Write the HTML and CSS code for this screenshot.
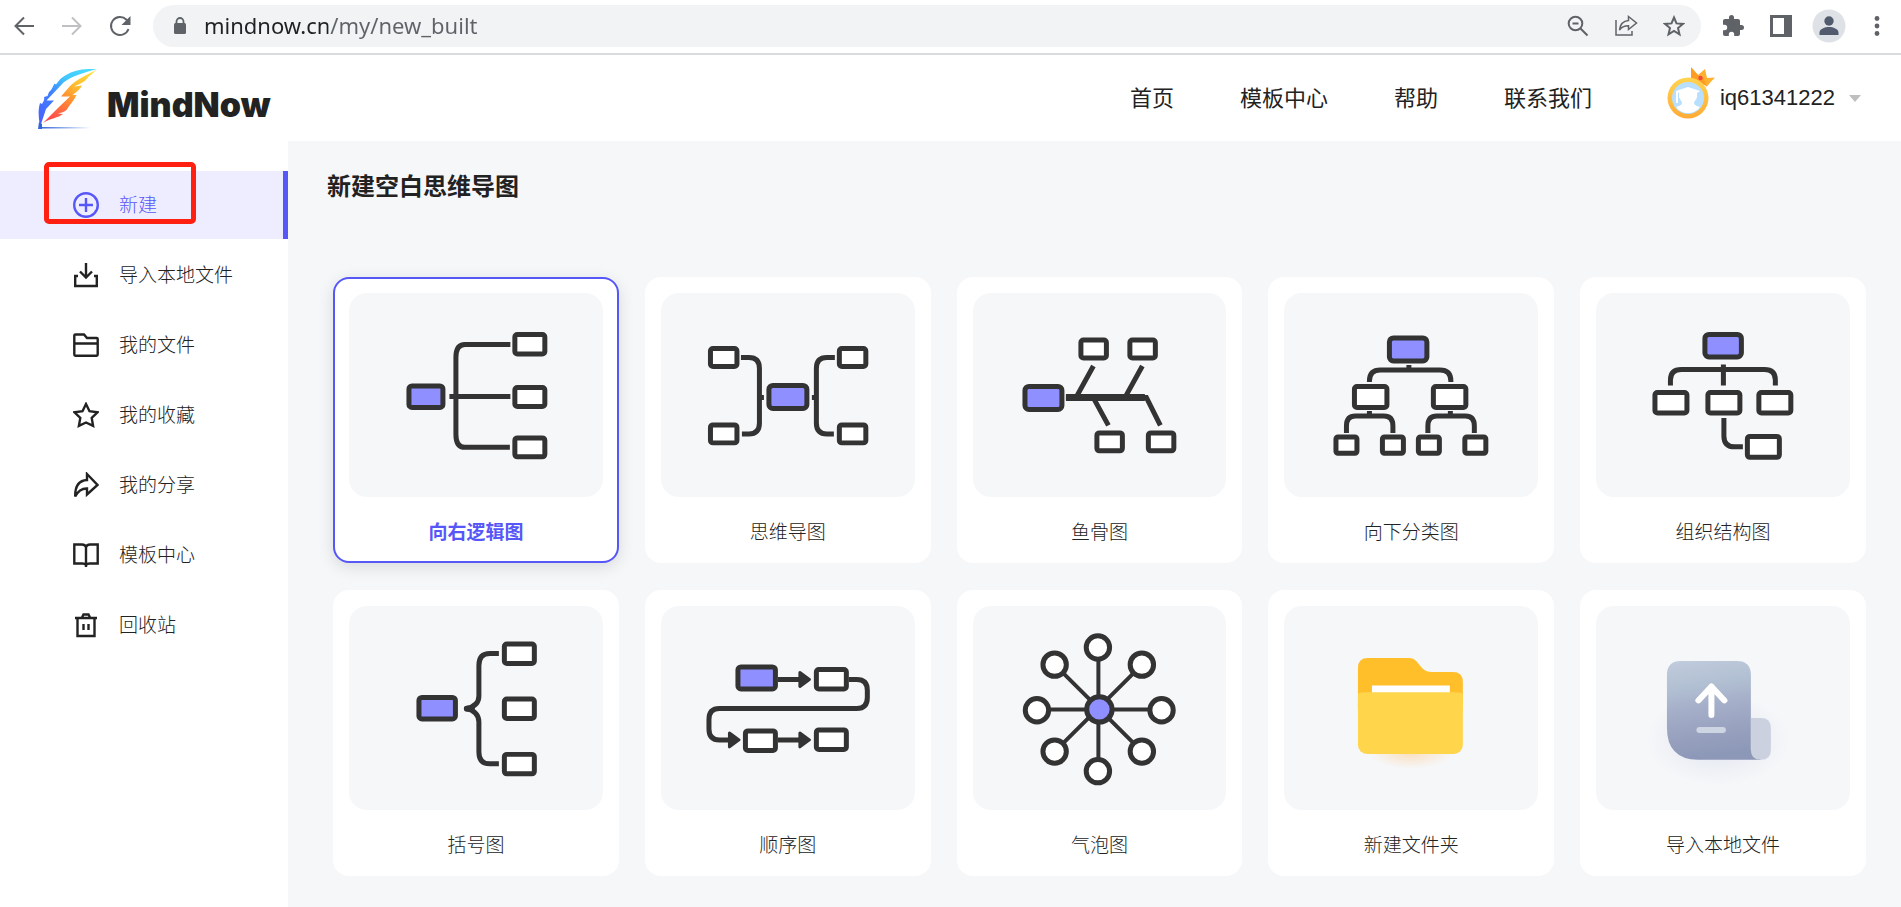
FILE: index.html
```
<!DOCTYPE html>
<html lang="zh-CN">
<head>
    <meta charset="UTF-8">
    <meta name="viewport" content="width=device-width, initial-scale=1.0">
    <title>MindNow</title>
    <link rel="stylesheet" href="styles.css">
</head>
<body>
    <!-- Browser toolbar -->
    <div class="browser-bar">
        <button class="tool" aria-label="后退"><svg width="22" height="22" viewBox="0 0 22 22" class="line"><path d="M21 11H3M11 2.500l-8.500 8.500 8.500 8.500"/></svg></button>
        <button class="tool disabled" aria-label="前进"><svg width="22" height="22" viewBox="0 0 22 22" class="line"><path d="M1 11h18M11 2.500l8.500 8.500-8.500 8.500"/></svg></button>
        <button class="tool" aria-label="刷新"><svg width="22" height="22" viewBox="0 0 22 22" class="line"><path d="M19.500 14A9 9 0 1 1 17.500 4.700L20 7.500"/><path d="M21.500 1v9h-9z" fill="#5f6368" stroke="none"/></svg></button>
        <div class="address">
            <svg class="lock" width="14" height="18" viewBox="0 0 14 18"><rect x="1" y="6" width="12" height="11" rx="1.500" fill="#5f6368"/><path d="M3.500 7V4.500a3.500 3.500 0 0 1 7 0V7" fill="none" stroke="#5f6368" stroke-width="1.800"/></svg>
            <input class="url" type="text" value="mindnow.cn/my/new_built" aria-label="地址">
            <button class="tool" aria-label="缩放"><svg width="22" height="22" viewBox="0 0 22 22" class="line"><circle cx="8.500" cy="8.500" r="6.800"/><path d="M13.500 13.500l7 7M5.500 8.500h6"/></svg></button>
            <button class="tool" aria-label="分享"><svg width="24" height="22" viewBox="0 0 24 22" class="line thin"><path d="M2 5v15h16v-4"/><path d="M14.500 1.500l8 6.500-8 6.500v-3.700c-4 0-7 1-9 4.200.6-5 3.500-9 9-9.500z"/></svg></button>
            <button class="tool" aria-label="收藏"><svg width="22" height="22" viewBox="0 0 22 22" class="line"><path d="M11 2.500l2.500 5.900 6.400.5-4.900 4.200 1.500 6.200-5.500-3.300-5.500 3.300L7 13.100 2.100 8.900l6.400-.5z"/></svg></button>
        </div>
        <button class="tool" aria-label="扩展程序"><svg width="24" height="24" viewBox="0 0 24 24"><path fill="#5f6368" d="M20.500 11H19V7c0-1.100-.9-2-2-2h-4V3.500a2.500 2.500 0 0 0-5 0V5H4c-1.100 0-2 .9-2 2v3.800h1.500a2.700 2.700 0 0 1 0 5.400H2V20c0 1.100.9 2 2 2h3.800v-1.500a2.700 2.700 0 0 1 5.400 0V22H17c1.100 0 2-.9 2-2v-4h1.500a2.500 2.500 0 0 0 0-5z"/></svg></button>
        <button class="tool" aria-label="侧边栏"><svg width="22" height="22" viewBox="0 0 22 22"><path fill="#5f6368" fill-rule="evenodd" d="M0 0h22v22H0zM3 3v16h11V3z"/><path fill="#fff" d="M3 3h11v16H3z"/></svg></button>
        <button class="tool" aria-label="用户"><svg width="34" height="34" viewBox="0 0 34 34"><circle cx="17" cy="17" r="16.500" fill="#dee1e6"/><circle cx="17" cy="12" r="4.700" fill="#525b6d"/><path d="M7.500 26v-2.500c0-3.600 5.500-5.500 9.500-5.500s9.500 1.900 9.500 5.500V26z" fill="#525b6d"/></svg></button>
        <button class="tool" aria-label="菜单"><svg width="6" height="22" viewBox="0 0 6 22" fill="#5f6368"><circle cx="3" cy="3.500" r="2.400"/><circle cx="3" cy="11" r="2.400"/><circle cx="3" cy="18.500" r="2.400"/></svg></button>
    </div>

    <!-- Site header -->
    <header class="header">
        <a class="logo" href="#">
            <svg width="60" height="60" viewBox="0 0 60 60">
                <defs>
                    <linearGradient id="featherBlue" x1="1" y1="0" x2="0" y2="1"><stop offset="0" stop-color="#4be0ff"/><stop offset=".35" stop-color="#42c8ff"/><stop offset=".6" stop-color="#3f82ff"/><stop offset="1" stop-color="#4a5cff"/></linearGradient>
                    <linearGradient id="featherWarm" x1=".9" y1="0" x2=".1" y2="1"><stop offset="0" stop-color="#ffe13c"/><stop offset=".35" stop-color="#ffb82e"/><stop offset=".65" stop-color="#ff7a38"/><stop offset="1" stop-color="#ff3f55"/></linearGradient>
                    <linearGradient id="inkLine" x1="0" x2="1"><stop offset="0" stop-color="#3566d8"/><stop offset="1" stop-color="#3566d8" stop-opacity="0"/></linearGradient>
                </defs>
                <path fill="url(#featherBlue)" d="M59 0C46-.5 36 1 28 6c-4 2-7 5-10 9.500l-1.500-1C14.500 18 14 21 11 23l-1.500 4-3.500 1c1 3-1 5-2 7l-2-1c-2 7-1.500 13-.5 20l1.500 1 5-15 8-8.500H8.500l17-18C34 7 44 4.500 59 0z"/>
                <path fill="url(#featherWarm)" d="M58.500.5C52 5 40 9 32 17l-9 10.500h9L21 38 5 54c8-5 15-5 20-9l-5-.5c4-1 6-1.500 8.500-3.500 3-5 8-10 10-15h-4c4-3 8-6 9.500-9.500L36 17.500c8-3.500 11-5 13-8 2-3 6-5 9.500-9z"/>
                <path fill="#3566d8" d="M1 53l3 2v5H0z"/>
                <path fill="url(#inkLine)" d="M3 58h50v1.500H3z"/>
            </svg>
            <span class="logo-text">MindNow</span>
        </a>
        <nav class="top-nav">
            <a href="#">首页</a>
            <a href="#">模板中心</a>
            <a href="#">帮助</a>
            <a href="#">联系我们</a>
        </nav>
        <button class="user">
            <svg width="48" height="54" viewBox="0 0 48 54">
                <defs>
                    <linearGradient id="ring" x1="0" y1="0" x2="0" y2="1"><stop offset="0" stop-color="#ffd451"/><stop offset="1" stop-color="#ffab36"/></linearGradient>
                </defs>
                <path fill="#ffb02e" d="M24 0l7 8 7-6 2 9 8-.5c-4 4-6 6-8 9z"/>
                <path fill="#ff9c24" d="M24 0v11l16 8.500-4-9-5-2.500z"/>
                <circle cx="33.500" cy="11" r="2.200" fill="#f0483e"/>
                <circle cx="21" cy="31" r="20.500" fill="url(#ring)"/>
                <circle cx="21" cy="31" r="16" fill="#b9dfff"/>
                <path fill="#fff" d="M21 20l12 4-3 2v4c-1 3-2 4-3 5 0 3 2 4 6 5-3 4-7 6-12 6s-9-2-12-6c4-1 6-2 6-5-1-1-2-3-3-5v-4l-1-.5V36H9V24z"/>
            </svg>
            <span>iq61341222</span>
            <svg class="caret" width="12" height="7" viewBox="0 0 12 7"><path d="M0 0h12L6 7z" fill="#bfbfbf"/></svg>
        </button>
    </header>

    <div class="page">
        <nav class="sidebar">
            <a class="side-item active" href="#">
                <svg width="26" height="26" viewBox="0 0 26 26"><circle cx="13" cy="13" r="11.800"/><path d="M13 6v14M6 13h14"/></svg>
                <span>新建</span>
                <i class="marker"></i>
            </a>
            <a class="side-item" href="#">
                <svg width="26" height="26" viewBox="0 0 26 26"><path d="M5 14H2.200v10h21.600V14H21M13 1v14M7 9.500l6 6 6-6"/></svg>
                <span>导入本地文件</span>
            </a>
            <a class="side-item" href="#">
                <svg width="26" height="26" viewBox="0 0 26 26"><path d="M2.500 2.500h8.500l3 3.500h9.700q1 0 1 1v15.500q0 1.200-1 1.200H2.300q-1 0-1-1.200V3.500q0-1 1.200-1zM1 11.500h24"/></svg>
                <span>我的文件</span>
            </a>
            <a class="side-item" href="#">
                <svg width="26" height="26" viewBox="0 0 26 26"><path d="M13 2l3.500 7.200 8 1.100-5.800 5.600 1.400 8L13 20.500l-7.100 3.400 1.400-8-5.800-5.600 8-1.100z"/></svg>
                <span>我的收藏</span>
            </a>
            <a class="side-item" href="#">
                <svg width="26" height="26" viewBox="0 0 26 26"><path d="M14 2l10.500 11L14 22.500V16.500C8 16.300 5 19 2.200 24.500 2 15 5 8.500 14 8z"/></svg>
                <span>我的分享</span>
            </a>
            <a class="side-item" href="#">
                <svg width="26" height="26" viewBox="0 0 26 26"><path d="M13 25V5q-1-2.500-4-2.500H1.300v19H9.500q2.500 0 3.500 1.500 1-1.500 3.500-1.500h8.200v-19H17q-3 0-4 2.500"/></svg>
                <span>模板中心</span>
            </a>
            <a class="side-item" href="#">
                <svg width="26" height="26" viewBox="0 0 26 26"><path d="M2 6h22M4.500 6v18h17V6M9 5.500l1.500-3h5l1.500 3M10.500 12v6M15.500 12v6"/></svg>
                <span>回收站</span>
            </a>
        </nav>

        <main class="content">
            <h1>新建空白思维导图</h1>
            <div class="cards">
                <button class="card selected">
                    <span class="preview"><svg class="diagram" viewBox="0 0 254 204">
                        <path d="M161.500 51.500H116q-9 0-9 13v77q0 13 9 13h45M100.500 103.500h61"/>
                        <rect class="root" x="60" y="93" width="34" height="21.500" rx="3"/>
                        <rect x="166" y="41.500" width="30" height="19.500" rx="2.500"/>
                        <rect x="166" y="94.500" width="30" height="19" rx="2.500"/>
                        <rect x="166" y="145" width="30" height="19" rx="2.500"/>
                    </svg></span>
                    <span class="label">向右逻辑图</span>
                </button>
                <button class="card">
                    <span class="preview"><svg class="diagram" viewBox="0 0 254 204">
                        <path d="M80 64.500h8q10.500 0 10.500 11V130q0 11-10.500 11h-7M98 104.500h5M174 64.500h-8q-10.500 0-10.500 11V130q0 11 10.500 11h7M151 104.500h5"/>
                        <rect class="root" x="108" y="92.500" width="38" height="23" rx="4"/>
                        <rect x="49.500" y="55.500" width="26.500" height="18" rx="2.500"/>
                        <rect x="49.500" y="132" width="26.500" height="18" rx="2.500"/>
                        <rect x="178.500" y="55.500" width="26.500" height="18" rx="2.500"/>
                        <rect x="178.500" y="132" width="26.500" height="18" rx="2.500"/>
                    </svg></span>
                    <span class="label">思维导图</span>
                </button>
                <button class="card">
                    <span class="preview"><svg class="diagram" viewBox="0 0 254 204">
                        <path d="M93 104.500h80.500l14 28M120.500 73L104 103M169.500 73L153 103M120.500 105l15 27.500"/>
                        <path d="M93 104.500h79" stroke-width="7"/>
                        <rect class="root" x="52" y="93.500" width="37" height="23" rx="4"/>
                        <rect x="108" y="47" width="25.500" height="18" rx="2.500"/>
                        <rect x="157" y="47" width="25.500" height="18" rx="2.500"/>
                        <rect x="124" y="140" width="25.500" height="18" rx="2.500"/>
                        <rect x="175.500" y="140" width="25.500" height="18" rx="2.500"/>
                    </svg></span>
                    <span class="label">鱼骨图</span>
                </button>
                <button class="card">
                    <span class="preview"><svg class="diagram" viewBox="0 0 254 204">
                        <path d="M85.500 89v-1q0-11 11-11h59.500q11 0 11 11v1M125 72v5M62.500 140v-7q0-10 9-10h28.500q9 0 9 10v7M85.500 118v5M144 140v-7q0-10 9-10h28.500q9 0 9 10v7M166.500 118v5"/>
                        <rect class="root" x="105.500" y="45" width="37.500" height="23" rx="4"/>
                        <rect x="70.500" y="93.500" width="32.500" height="21" rx="2.500"/>
                        <rect x="149.500" y="93.500" width="32.500" height="21" rx="2.500"/>
                        <rect x="52" y="144" width="21" height="16.500" rx="2"/>
                        <rect x="98.500" y="144" width="21" height="16.500" rx="2"/>
                        <rect x="134.500" y="144" width="21" height="16.500" rx="2"/>
                        <rect x="181" y="144" width="21" height="16.500" rx="2"/>
                    </svg></span>
                    <span class="label">向下分类图</span>
                </button>
                <button class="card">
                    <span class="preview"><svg class="diagram" viewBox="0 0 254 204">
                        <path d="M74.500 92.500V87q0-10.500 11-10.500h83q11 0 11 10.500v5.500M127.500 71.500v21M128 125v18q0 11 11 11h8"/>
                        <rect class="root" x="109" y="41.500" width="36.500" height="22.500" rx="4"/>
                        <rect x="59" y="99.500" width="32" height="20.500" rx="2.500"/>
                        <rect x="112" y="99.500" width="32" height="20.500" rx="2.500"/>
                        <rect x="163" y="99.500" width="32" height="20.500" rx="2.500"/>
                        <rect x="151.500" y="143.500" width="32" height="21" rx="2.500"/>
                    </svg></span>
                    <span class="label">组织结构图</span>
                </button>
                <button class="card">
                    <span class="preview"><svg class="diagram" viewBox="0 0 254 204">
                        <path d="M150 47.500h-9q-11 0-11 12V90q0 10-12.500 12.500Q130 106 130 116v30q0 12 11 12h9" stroke-linejoin="round"/>
                        <path d="M118 102.800h5" stroke-width="6" stroke-linecap="round"/>
                        <rect class="root" x="70" y="91.500" width="36.500" height="21.500" rx="3"/>
                        <rect x="155.500" y="38" width="30" height="19.500" rx="2.500"/>
                        <rect x="155.500" y="93" width="30" height="19.500" rx="2.500"/>
                        <rect x="155.500" y="148.500" width="30" height="19.500" rx="2.500"/>
                    </svg></span>
                    <span class="label">括号图</span>
                </button>
                <button class="card">
                    <span class="preview"><svg class="diagram" viewBox="0 0 254 204">
                        <path d="M117 73.500h23M188 73.500h8q10.500 0 10.500 11v7q0 11-10.500 11H58.500q-10.500 0-10.500 11v9.500q0 11 10.500 11H69M117 134h23"/>
                        <path class="head" d="M139 66.500l9.500 7-9.500 7zM139 127l9.500 7-9.500 7zM68.500 127l9.500 7-9.500 7z"/>
                        <rect class="root" x="77" y="61" width="37.500" height="22" rx="3"/>
                        <rect x="155.500" y="63.500" width="30" height="19.500" rx="2.500"/>
                        <rect x="84.500" y="125" width="30" height="19.500" rx="2.500"/>
                        <rect x="155.500" y="124" width="30" height="19.500" rx="2.500"/>
                    </svg></span>
                    <span class="label">顺序图</span>
                </button>
                <button class="card">
                    <span class="preview"><svg class="diagram" viewBox="0 0 254 204">
                        <path stroke-width="4" d="M125.500 41v124M64 103.500h124M82 59l87 86.500M169 59l-87 86.500"/>
                        <circle class="root" cx="126.500" cy="103.500" r="12.700"/>
                        <circle cx="125" cy="41.500" r="11.700"/>
                        <circle cx="169" cy="58.700" r="11.700"/>
                        <circle cx="188.700" cy="104.300" r="11.700"/>
                        <circle cx="169" cy="145.700" r="11.700"/>
                        <circle cx="125" cy="165.300" r="11.700"/>
                        <circle cx="81.700" cy="145.700" r="11.700"/>
                        <circle cx="64" cy="104.300" r="11.700"/>
                        <circle cx="81.700" cy="58.700" r="11.700"/>
                    </svg></span>
                    <span class="label">气泡图</span>
                </button>
                <button class="card">
                    <span class="preview"><svg viewBox="0 0 254 204">
                        <defs>
                            <radialGradient id="folderGlow"><stop offset="0" stop-color="#ffc27a" stop-opacity=".45"/><stop offset="1" stop-color="#ffc27a" stop-opacity="0"/></radialGradient>
                        </defs>
                        <ellipse cx="127" cy="147" rx="42" ry="16" fill="url(#folderGlow)"/>
                        <path fill="#ffbf2a" d="M74 62q0-10 10-10h41c11 0 10 14 23 14h21q10 0 10 10v24H74z"/>
                        <path fill="#fff" d="M88 79.500h78V90H88z"/>
                        <rect x="74" y="86.500" width="105" height="61.500" fill="#ffd54c" rx="9"/>
                        <rect x="74" y="86.500" width="105" height="20" fill="#ffd54c" rx="3"/>
                    </svg></span>
                    <span class="label">新建文件夹</span>
                </button>
                <button class="card">
                    <span class="preview"><svg viewBox="0 0 254 204">
                        <defs>
                            <linearGradient id="sheet" x1="0" y1="0" x2=".15" y2="1"><stop offset="0" stop-color="#c1ccdd"/><stop offset=".3" stop-color="#b1bfd2"/><stop offset=".5" stop-color="#a5afc9"/><stop offset="1" stop-color="#8d97b7"/></linearGradient>
                            <radialGradient id="sheetGlow"><stop offset="0" stop-color="#a9b8d6" stop-opacity=".3"/><stop offset="1" stop-color="#a9b8d6" stop-opacity="0"/></radialGradient>
                        </defs>
                        <ellipse cx="122" cy="134" rx="72" ry="46" fill="url(#sheetGlow)"/>
                        <path fill="url(#sheet)" d="M71 69q0-14 14-14h56q14 0 14 14v75l10 10h-63q-31-1-31-32z"/>
                        <path fill="#ccd1e0" d="M155 112h10q10 0 10 10v22q0 10-10 10t-10-10z"/>
                        <path d="M115.500 82v27M102.500 94.500l13-14 13 14" fill="none" stroke="#fff" stroke-width="6" stroke-linecap="round" stroke-linejoin="round"/>
                        <rect x="100.500" y="121" width="29.500" height="6" rx="3" fill="#cdd4e2"/>
                    </svg></span>
                    <span class="label">导入本地文件</span>
                </button>
            </div>
        </main>
    </div>
</body>
</html>
```
FILE: styles.css
```
* {
    box-sizing: border-box;
}
body {
    display: flex;
    flex-direction: column;
    min-height: 100vh;
    margin: 0;
    font-family: "Liberation Sans", "Noto Sans CJK SC", sans-serif;
    background: #fff;
    color: #222;
}
a {
    color: inherit;
    text-decoration: none;
}
button {
    padding: 0;
    border: none;
    background: none;
    font-family: inherit;
    color: inherit;
    cursor: pointer;
}

/* browser toolbar */
.browser-bar {
    display: flex;
    align-items: center;
    padding: 5px 0 6px;
    border-bottom: 2px solid #dadbdc;
}
.tool {
    display: flex;
    flex: none;
    align-items: center;
    justify-content: center;
    width: 48px;
    height: 42px;
}
.tool.disabled {
    opacity: 0.4;
}
.line {
    fill: none;
    stroke: #5f6368;
    stroke-width: 2;
}
.line.thin {
    stroke-width: 1.5;
}
.address {
    display: flex;
    flex: 1;
    align-items: center;
    height: 42px;
    margin: 0 8px 0 9px;
    padding: 0 3px 0 20px;
    border-radius: 21px;
    background: #f1f3f4;
}
.lock {
    flex: none;
}
.url {
    flex: 1;
    height: 42px;
    margin-left: 17px;
    padding: 0 0 2px;
    border: none;
    outline: none;
    font-family: "Noto Sans", sans-serif;
    font-size: 22px;
    /* domain dark, path grey */
    background: linear-gradient(90deg, #202124 124px, #5f6368 124px);
    -webkit-background-clip: text;
    background-clip: text;
    -webkit-text-fill-color: transparent;
}

/* header */
.header {
    display: flex;
    align-items: center;
    height: 86px;
    padding: 0 40px 0 38px;
}
.logo {
    display: flex;
    align-items: center;
    gap: 9px;
    margin-right: auto;
}
.logo svg {
    margin-top: 2px;
}
.logo-text {
    padding-top: 14px;
    font-family: Inter, sans-serif;
    font-size: 34px;
    font-weight: 900;
    line-height: 40px;
}
.top-nav {
    display: flex;
    gap: 66px;
    margin-right: 75px;
    padding-bottom: 5px;
    font-size: 22px;
    font-weight: 400;
}
.user {
    display: flex;
    align-items: center;
    gap: 5px;
    font-size: 22px;
}
.user svg:first-child {
    margin-bottom: 8px;
}
.caret {
    margin-left: 9px;
}

/* sidebar */
.page {
    display: flex;
    flex: 1;
}
.sidebar {
    display: flex;
    flex: none;
    flex-direction: column;
    gap: 2px;
    width: 288px;
    padding-top: 30px;
}
.side-item {
    display: flex;
    position: relative;
    align-items: center;
    gap: 20px;
    height: 68px;
    padding-left: 73px;
    border-right: 5px solid transparent;
    font-size: 19px;
    font-weight: 300;
}
.side-item span {
    padding-bottom: 4px;
}
.side-item svg {
    fill: none;
    stroke: #222;
    stroke-width: 2.4;
}
.side-item.active {
    border-right-color: #5757f8;
    background: #eeedff;
    color: #5757f8;
}
.side-item.active svg {
    stroke: #5757f8;
}
.marker {
    position: absolute;
    top: -9px;
    left: 44px;
    width: 152px;
    height: 62px;
    border: 5px solid #ff2012;
    border-radius: 5px;
}

/* content */
.content {
    flex: 1;
    padding: 28px 35px 30px 39px;
    background: #f6f7f9;
}
h1 {
    margin: 0 0 72px;
    font-size: 24px;
    line-height: 36px;
}
.cards {
    display: grid;
    grid-template-columns: repeat(5, 1fr);
    gap: 27px 26px;
    padding-left: 6px;
}
.card {
    display: flex;
    flex-direction: column;
    padding: 14px;
    border: 2px solid #fff;
    border-radius: 16px;
    background: #fff;
}
.card.selected {
    border-color: #5757f8;
    box-shadow: 0 4px 16px rgba(0, 0, 0, 0.12);
}
.preview {
    display: block;
    width: 100%;
    border-radius: 18px;
    background: #f6f7f9;
}
.preview svg {
    display: block;
    width: 100%;
}
.diagram {
    fill: none;
    stroke: #333;
    stroke-width: 5;
}
.diagram rect,
.diagram circle {
    fill: #fff;
}
.diagram .root {
    fill: #8f8fff;
}
.diagram .head {
    fill: #333;
    stroke-width: 3;
    stroke-linejoin: round;
}
.label {
    width: 100%;
    padding-top: 22px;
    font-size: 19px;
    font-weight: 300;
    line-height: 28px;
    text-align: center;
}
.selected .label {
    color: #5757f8;
    font-weight: 700;
}
```
